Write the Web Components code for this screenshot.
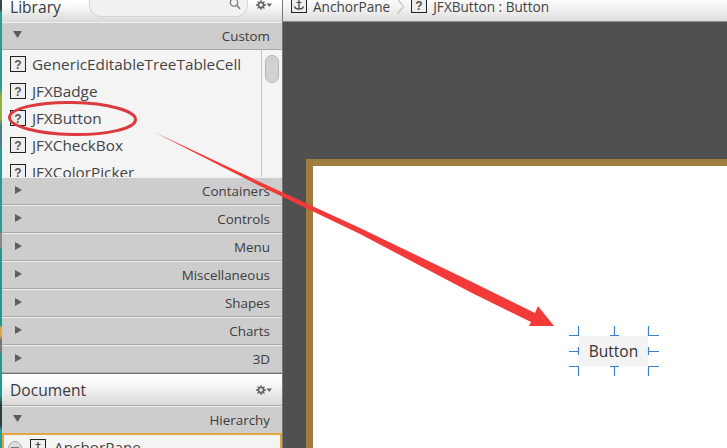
<!DOCTYPE html>
<html>
<head>
<meta charset="utf-8">
<title>Scene Builder</title>
<style>
    html, body { margin: 0; height: 448px; overflow: hidden; }
    body { font-family: "Open Sans", "Liberation Sans", sans-serif; color: #333; }
</style>
</head>
<body>
<sb-app></sb-app>

<script>
const ICON_UNKNOWN = `<svg width="16" height="16" viewBox="0 0 16 16"><rect x=".5" y=".5" width="15" height="15" fill="#eee" stroke="#222"/><text x="8" y="12.5" text-anchor="middle" font-family="Liberation Sans, sans-serif" font-size="12" font-weight="700" fill="#555">?</text></svg>`;
const ICON_ANCHOR = `<svg width="16" height="16" viewBox="0 0 16 16"><rect x=".5" y=".5" width="15" height="15" fill="#eee" stroke="#222"/><path d="M8 3v9M5.500 5.500h5M3.500 9.500c.5 2 2 2.600 4.500 2.600s4-.6 4.500-2.600" fill="none" stroke="#444" stroke-width="1.200"/></svg>`;
const ICON_GEAR = `<svg width="16" height="10" viewBox="0 0 16 10"><circle cx="5" cy="5" r="2.600" fill="none" stroke="#666" stroke-width="1.800"/><path d="M5 0v2M5 8v2M0 5h2M8 5h2M1.500 1.500l1.300 1.300M7.200 7.200l1.300 1.300M8.500 1.500L7.200 2.800M2.800 7.200L1.500 8.500" stroke="#666" stroke-width="1.300"/><path d="M10.500 3.500h5.500L13.200 7z" fill="#666"/></svg>`;

class SbPanelTitle extends HTMLElement {
    constructor() {
        super();
        this.attachShadow({ mode: "open" });
        this.shadowRoot.innerHTML = `
            <style>
                :host {
                    display: flex;
                    align-items: center;
                    justify-content: space-between;
                    box-sizing: border-box;
                    padding: 0 10px 0 8px;
                    background: linear-gradient(#fff 0, #f7f7f7 35%, #d9d9d9 100%);
                    font-size: 15.600px;
                    color: #3a3a3a;
                }
            </style>
            <slot></slot>
            <slot name="tools"></slot>
        `;
    }
}

class SbSearch extends HTMLElement {
    constructor() {
        super();
        this.attachShadow({ mode: "open" });
        this.shadowRoot.innerHTML = `
            <style>
                :host {
                    display: flex;
                    align-items: flex-start;
                    gap: 8px;
                    height: 22px;
                }
                .field {
                    box-sizing: border-box;
                    width: 159px;
                    height: 18px;
                    margin-top: -1px;
                    border: 1px solid #d6d6d6;
                    border-top: 0;
                    border-radius: 0 0 12px 12px;
                    background: #f1f1f1;
                    display: flex;
                    justify-content: flex-end;
                    align-items: center;
                    padding: 0 6px 7px 0;
                }
                svg { display: block; }
            </style>
            <div class="field">
                <svg width="12" height="12" viewBox="0 0 12 12"><circle cx="5" cy="4.500" r="3.700" fill="none" stroke="#777" stroke-width="1.200"/><path d="M7.700 7.300L11 11" stroke="#777" stroke-width="1.500"/></svg>
            </div>
            <span>${ICON_GEAR}</span>
        `;
    }
}

class SbSection extends HTMLElement {
    constructor() {
        super();
        this.attachShadow({ mode: "open" });
    }

    connectedCallback() {
        const open = this.hasAttribute("open");
        const size = open ? 'width="9" height="7" viewBox="0 0 9 7"' : 'width="7" height="8" viewBox="0 0 7 8"';
        const arrow = open ? "M0 0h9L4.500 7z" : "M0 0l7 4-7 4z";
        this.shadowRoot.innerHTML = `
            <style>
                :host {
                    display: flex;
                    align-items: center;
                    justify-content: space-between;
                    box-sizing: border-box;
                    height: 28px;
                    padding: 0 12px 0 ${open ? 11 : 13}px;
                    background: #cdcdcd;
                    border-top: 1px solid #f0f0f0;
                    border-bottom: 1px solid #a8a8a8;
                    font-size: 13.400px;
                    color: #3c3c3c;
                }
                svg { display: block; margin-top: -3px; }
            </style>
            <svg ${size}><path d="${arrow}" fill="#5c5c5c"/></svg>
            <slot></slot>
        `;
    }
}

class SbItem extends HTMLElement {
    constructor() {
        super();
        this.attachShadow({ mode: "open" });
        this.shadowRoot.innerHTML = `
            <style>
                :host {
                    display: flex;
                    align-items: center;
                    gap: 6px;
                    height: 27px;
                    flex: none;
                    padding-left: 8px;
                    font-size: 15.300px;
                    color: #444;
                    white-space: nowrap;
                }
                svg { display: block; flex: none; }
            </style>
            ${ICON_UNKNOWN}
            <slot></slot>
        `;
    }
}

class SbLibraryList extends HTMLElement {
    constructor() {
        super();
        this.attachShadow({ mode: "open" });
        this.shadowRoot.innerHTML = `
            <style>
                :host {
                    display: flex;
                    height: 127px;
                    background: #f4f4f4;
                    overflow: hidden;
                }
                .items {
                    flex: 1;
                    display: flex;
                    flex-direction: column;
                    min-width: 0;
                }
                .track {
                    flex: none;
                    box-sizing: border-box;
                    width: 21px;
                    border-left: 1px solid #c4c4c4;
                    padding: 5px 3px 0 3px;
                }
                .thumb {
                    height: 26px;
                    border: 1px solid #b5b5b5;
                    border-radius: 7px;
                    background: #d2d2d2;
                }
            </style>
            <div class="items"><slot></slot></div>
            <div class="track"><div class="thumb"></div></div>
        `;
    }
}

class SbHierarchy extends HTMLElement {
    constructor() {
        super();
        this.attachShadow({ mode: "open" });
        this.shadowRoot.innerHTML = `
            <style>
                :host {
                    display: flex;
                    align-items: flex-start;
                    gap: 8px;
                    flex: 1;
                    min-height: 0;
                    box-sizing: border-box;
                    padding: 4px 0 0 4px;
                    background: #f4f4f4;
                    border: 2px solid #e3a63f;
                    border-bottom: 0;
                    margin-top: -1px;
                    font-size: 15.300px;
                    color: #444;
                    overflow: hidden;
                }
                .minus {
                    flex: none;
                    box-sizing: border-box;
                    width: 14px;
                    height: 14px;
                    margin-top: 2px;
                    border: 1px solid #aaa;
                    border-radius: 50%;
                    background: #ddd;
                    display: flex;
                    align-items: center;
                    justify-content: center;
                }
                .minus i { width: 8px; height: 2px; background: #777; }
                .row { display: flex; align-items: center; gap: 8px; line-height: 16px; }
                svg { display: block; flex: none; }
            </style>
            <div class="minus"><i></i></div>
            <div class="row">${ICON_ANCHOR}<slot></slot></div>
        `;
    }
}

class SbCrumbs extends HTMLElement {
    constructor() {
        super();
        this.attachShadow({ mode: "open" });
        this.shadowRoot.innerHTML = `
            <style>
                :host {
                    display: flex;
                    align-items: flex-start;
                    box-sizing: border-box;
                    height: 22px;
                    padding: 0 0 0 8px;
                    background: linear-gradient(#fbfbfb, #ececec 60%, #dcdcdc);
                    border-bottom: 1px solid #8f8f8f;
                    font-size: 13.600px;
                    line-height: 13px;
                    color: #444;
                    white-space: nowrap;
                    overflow: hidden;
                }
                svg { display: block; flex: none; margin-top: -3px; }
                .anchor { margin-right: 6px; }
                .sep { margin: -2px 7px 0 7px; }
                .unknown { margin-right: 6px; }
            </style>
            <span class="anchor">${ICON_ANCHOR}</span>
            <span>AnchorPane</span>
            <svg class="sep" width="7" height="17" viewBox="0 0 7 17"><path d="M.5 1l6 7.500-6 7.500" fill="none" stroke="#aaa"/></svg>
            <span class="unknown">${ICON_UNKNOWN}</span>
            <span>JFXButton : Button</span>
        `;
    }
}

class SbSelectedButton extends HTMLElement {
    constructor() {
        super();
        this.attachShadow({ mode: "open" });
        this.shadowRoot.innerHTML = `
            <style>
                :host {
                    display: block;
                    position: relative;
                    width: 69px;
                    height: 30px;
                }
                .btn {
                    width: 100%;
                    height: 100%;
                    display: flex;
                    align-items: center;
                    justify-content: center;
                    background: #f3f3f3;
                    font-size: 15.500px;
                    color: #333;
                }
                svg { position: absolute; left: -10px; top: -10px; }
            </style>
            <div class="btn"><slot></slot></div>
            <svg width="90" height="50" viewBox="0 0 90 50" fill="none" stroke="#3f7fc8" stroke-width="1.200">
                <path d="M0 9.500H9.500V0M79.500 0V9.500H90M0 40.500H9.500V50M79.500 50V40.500H90"/>
                <path d="M0 25.500H9.500M9.500 21v8M79.500 21v8M79.500 25.500H90M41 9.500h9M45.500 0V9.500M41 40.500h9M45.500 40.500V50"/>
            </svg>
        `;
    }
}

class SbStage extends HTMLElement {
    constructor() {
        super();
        this.attachShadow({ mode: "open" });
        this.shadowRoot.innerHTML = `
            <style>
                :host {
                    display: block;
                    flex: 1;
                    min-height: 0;
                    box-sizing: border-box;
                    padding: 137px 0 0 23px;
                    overflow: hidden;
                    background-color: #505050;
                    background-image: repeating-conic-gradient(#4b4b4b 0 25%, #555 0 50%);
                    background-size: 2px 2px;
                }
                .pane {
                    box-sizing: border-box;
                    height: 400px;
                    margin-right: -20px;
                    padding: 170px 0 0 266px;
                    background: #fff;
                    border: 7px solid #9e7d3f;
                    border-right: 0;
                    border-bottom: 0;
                }
            </style>
            <div class="pane"><slot></slot></div>
        `;
    }
}

class SbApp extends HTMLElement {
    constructor() {
        super();
        this.attachShadow({ mode: "open" });
        this.shadowRoot.innerHTML = `
            <style>
                :host {
                    display: block;
                    position: relative;
                    width: 727px;
                    height: 448px;
                    overflow: hidden;
                }
                .window { display: flex; height: 100%; }
                .desk {
                    flex: none;
                    width: 2px;
                    background: linear-gradient(#3b4a45 0 10px, #2f9a94 12px 88px, #8fb03a 96px 118px, #4b7d8a 126px 145px, #2a9a94 150px 230px, #8a8a8a 234px 246px, #1f9a90 250px 325px, #e0a93f 328px 335px, #777 340px 350px, #229a90 355px 395px, #2b3b3b 405px 425px, #2a9a94 430px);
                }
                .side {
                    flex: none;
                    width: 280px;
                    display: flex;
                    flex-direction: column;
                    background: #ddd;
                }
                .gap {
                    flex: none;
                    width: 1px;
                    background: #777;
                }
                .main {
                    flex: 1;
                    min-width: 0;
                    display: flex;
                    flex-direction: column;
                }
                sb-panel-title.lib { height: 22px; align-items: flex-start; line-height: 14px; overflow: hidden; }
                sb-panel-title.doc { height: 33px; border-top: 1px solid #777; border-bottom: 1px solid #a8a8a8; }
                .tools svg { display: block; }
                .notes {
                    position: absolute;
                    left: 0;
                    top: 0;
                    pointer-events: none;
                }
            </style>
            <div class="window">
                <div class="desk"></div>
                <div class="side">
                    <sb-panel-title class="lib">Library<sb-search slot="tools"></sb-search></sb-panel-title>
                    <sb-section open>Custom</sb-section>
                    <sb-library-list>
                        <sb-item>GenericEditableTreeTableCell</sb-item>
                        <sb-item>JFXBadge</sb-item>
                        <sb-item>JFXButton</sb-item>
                        <sb-item>JFXCheckBox</sb-item>
                        <sb-item>JFXColorPicker</sb-item>
                    </sb-library-list>
                    <sb-section>Containers</sb-section>
                    <sb-section>Controls</sb-section>
                    <sb-section>Menu</sb-section>
                    <sb-section>Miscellaneous</sb-section>
                    <sb-section>Shapes</sb-section>
                    <sb-section>Charts</sb-section>
                    <sb-section>3D</sb-section>
                    <sb-panel-title class="doc">Document<span class="tools" slot="tools">${ICON_GEAR}</span></sb-panel-title>
                    <sb-section open>Hierarchy</sb-section>
                    <sb-hierarchy>AnchorPane</sb-hierarchy>
                </div>
                <div class="gap"></div>
                <div class="main">
                    <sb-crumbs></sb-crumbs>
                    <sb-stage><sb-selected-button>Button</sb-selected-button></sb-stage>
                </div>
            </div>
            <svg class="notes" width="727" height="448" viewBox="0 0 727 448">
                <ellipse cx="72.500" cy="118.500" rx="63" ry="16" transform="rotate(1 72.500 118.500)" fill="none" stroke="#dc3a3f" stroke-width="3"/>
                <path d="M154 132L260 182L360 228L470 281L535 313L538 306L554 326L529 326L531 322L470 292L360 234L260 186Z" fill="#f23a3a"/>
            </svg>
        `;
    }
}

customElements.define("sb-panel-title", SbPanelTitle);
customElements.define("sb-search", SbSearch);
customElements.define("sb-section", SbSection);
customElements.define("sb-item", SbItem);
customElements.define("sb-library-list", SbLibraryList);
customElements.define("sb-hierarchy", SbHierarchy);
customElements.define("sb-crumbs", SbCrumbs);
customElements.define("sb-selected-button", SbSelectedButton);
customElements.define("sb-stage", SbStage);
customElements.define("sb-app", SbApp);
</script>
</body>
</html>
